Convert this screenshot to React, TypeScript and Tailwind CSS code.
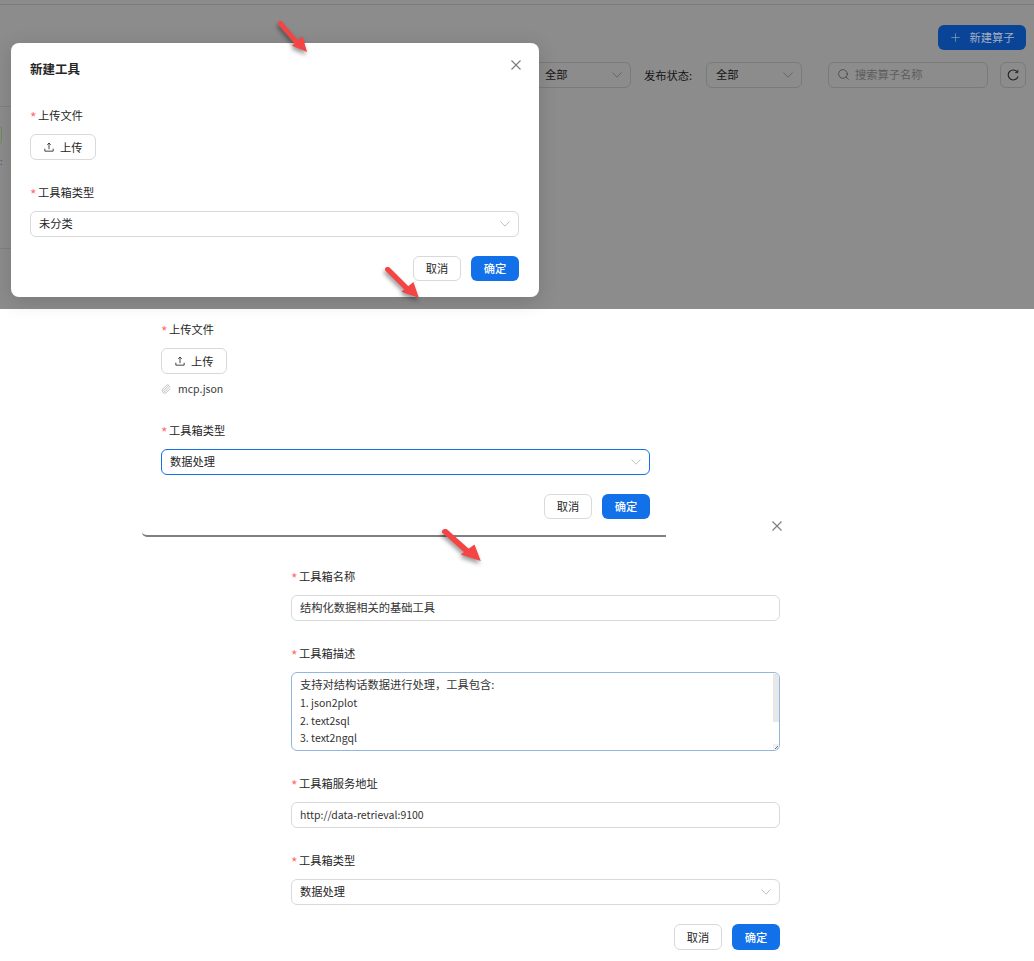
import { Paperclip, Search, Plus } from "lucide-react";
import type { ReactNode } from "react";

const font = "font-['Noto_Sans_CJK_SC','Noto_Sans',sans-serif]";

function Chevron({ color = "#bfbfbf" }: { color?: string }) {
  return (
    <svg width="10" height="6" viewBox="0 0 10 6" fill="none" stroke={color} strokeWidth="1">
      <path d="M0.5 0.5 5 5.2 9.5 0.5" />
    </svg>
  );
}

function Close() {
  return (
    <svg width="10" height="10" viewBox="0 0 10 10" fill="none" stroke="#7a7a7a" strokeWidth="1.1" className="shrink-0">
      <path d="M0.5 0.5 9.5 9.5M9.5 0.5 0.5 9.5" />
    </svg>
  );
}

function Arrow({ className }: { className: string }) {
  return (
    <svg
      viewBox="0 0 32 32"
      preserveAspectRatio="none"
      className={`pointer-events-none absolute drop-shadow-[-1px_3px_2px_rgba(0,0,0,0.4)] ${className}`}
    >
      <path d="M2.5 2.5 20 22" stroke="#f44444" strokeWidth="5" strokeLinecap="round" />
      <path d="M31 32 15 25.5 26 15.5Z" fill="#f44444" />
    </svg>
  );
}

function Label({ children }: { children: ReactNode }) {
  return (
    <div className="mb-[9px] flex h-5 items-center text-[11.25px] text-[#262626]">
      <span className="mr-[2px] h-[14px] w-[6px] text-[14px] leading-[18px] text-[#ff7070]">*</span>
      {children}
    </div>
  );
}

function UploadButton() {
  return (
    <div className="flex h-[26px] w-[66px] items-center rounded-[6px] border border-[#d9d9d9] bg-white pl-[13px] text-[11.25px] text-[#262626]">
      <svg width="10" height="10" viewBox="0 0 12 12" fill="none" stroke="#333" strokeWidth="1.1" className="mr-[6px]">
        <path d="M6 1.2V8.6M3.9 3.3 6 1.2 8.1 3.3M1 8v3h10V8" />
      </svg>
      <span>上传</span>
    </div>
  );
}

function SelectBox({ value, focused }: { value: string; focused?: boolean }) {
  return (
    <div
      className={`flex h-[26px] items-center justify-between rounded-[6px] border bg-white pb-px pl-[8px] pr-[8px] text-[11.25px] text-[#262626] ${
        focused ? "border-[#1470e6]" : "border-[#d9d9d9]"
      }`}
    >
      <span>{value}</span>
      <Chevron />
    </div>
  );
}

function TextInput({ value, small }: { value: string; small?: boolean }) {
  return (
    <div
      className={`flex h-[26px] items-center rounded-[6px] border border-[#d9d9d9] bg-white px-[8px] text-[#333] ${
        small ? "text-[10.5px]" : "pb-px text-[11.25px]"
      }`}
    >
      {value}
    </div>
  );
}

function Footer({ height = "h-[25px]" }: { height?: string }) {
  return (
    <div className="mt-[19px] flex justify-end gap-[10px] text-[11.25px]">
      <div className={`flex w-[48px] items-center justify-center rounded-[6px] border border-[#d9d9d9] bg-white text-[#262626] ${height}`}>
        取消
      </div>
      <div className={`flex w-[48px] items-center justify-center rounded-[6px] bg-[#1271e8] font-medium text-white ${height}`}>
        确定
      </div>
    </div>
  );
}

function DimSelect({ value }: { value: string }) {
  return (
    <div className="flex h-[26px] w-[96px] items-center justify-between rounded-[6px] border border-[#7a7a7a] pb-px pl-[9px] pr-[8px] text-[11.25px] text-[#141414]">
      <span>{value}</span>
      <Chevron color="#666" />
    </div>
  );
}

function Backdrop() {
  return (
    <div className="relative h-[309px] bg-[#8c8c8c]">
      <div className="h-[5px] border-b border-[#7b7b7b]" />
      <div className="flex">
        <div className="mt-[101px] flex h-[143px] w-[11px] flex-col border-y border-[#808080] pt-[20px]">
          <div className="h-[16px] w-[2px] rounded-r-[2px] border border-l-0 border-[#6f8a5a]" />
          <div className="mt-[14px] text-[9px] leading-[10px] text-[#2f5488]">:</div>
        </div>
        <div className="flex flex-1 flex-col items-end pr-[8px] pt-[20px]">
          <div className="flex h-[25px] w-[88px] items-center justify-center gap-[7px] rounded-[6px] bg-[#0a4496] text-[11.25px] text-[#a3afc2]">
            <Plus size={13} strokeWidth={1.1} />
            新建算子
          </div>
          <div className="mt-[12px] flex items-center text-[11.25px] text-[#141414]">
            <DimSelect value="全部" />
            <span className="ml-[13px] mr-[10px] w-[52px] whitespace-nowrap">发布状态:</span>
            <DimSelect value="全部" />
            <div className="ml-[26px] flex h-[26px] w-[160px] items-center gap-[5px] rounded-[6px] border border-[#7a7a7a] pb-px pl-[8px] text-[#5c5c5c]">
              <Search size={13} strokeWidth={1.2} color="#333" />
              搜索算子名称
            </div>
            <div className="ml-[12px] flex h-[26px] w-[26px] items-center justify-center rounded-[6px] border border-[#7a7a7a]">
              <svg width="12" height="12" viewBox="0 0 12 12" fill="none" stroke="#222" strokeWidth="1.1">
                <path d="M10.4 3.2A5 5 0 1 0 11 7.4" />
                <path d="M10.8 0.9V3.6H8.2" strokeWidth="0.9" />
              </svg>
            </div>
          </div>
        </div>
      </div>

      <div className="absolute left-[11px] top-[43px] w-[528px] rounded-[8px] bg-white px-[19px] pb-[16px] pt-[16px] shadow-[0_4px_20px_rgba(0,0,0,0.15)]">
        <div className="mb-[26px] flex h-5 w-[489px] items-start justify-between">
          <span className="text-[12.5px] font-bold leading-5 text-[#262626]">新建工具</span>
          <span className="-mr-[2px] mt-px">
            <Close />
          </span>
        </div>
        <div className="w-[489px]">
          <Label>上传文件</Label>
          <div className="mb-[22px]">
            <UploadButton />
          </div>
          <Label>工具箱类型</Label>
          <SelectBox value="未分类" />
          <Footer />
        </div>
      </div>
    </div>
  );
}

function UploadedForm() {
  return (
    <div className="flex">
      <div className="ml-[142px] h-[228px] w-[524px] rounded-bl-[5px] border-b-2 border-[#7f7f7f] pl-[19px] pt-[10px]">
        <div className="w-[489px]">
          <Label>上传文件</Label>
          <UploadButton />
          <div className="mb-[22px] mt-[6px] flex h-[18px] items-center gap-[7px] text-[10.5px] text-[#3a3a3a]">
            <Paperclip size={10} strokeWidth={1.4} color="#999" />
            mcp.json
          </div>
          <Label>工具箱类型</Label>
          <SelectBox value="数据处理" focused />
          <Footer />
        </div>
      </div>
      <div className="ml-[106px] mt-[212px]">
        <Close />
      </div>
    </div>
  );
}

function DetailForm() {
  return (
    <div className="w-[489px] pt-[29px]">
      <Label>工具箱名称</Label>
      <div className="mb-[22px]">
        <TextInput value="结构化数据相关的基础工具" />
      </div>
      <Label>工具箱描述</Label>
      <div className="relative mb-[22px] h-[79px] overflow-hidden rounded-[6px] border border-[#93b5e1] bg-white pl-[8px] pt-[3px] text-[10.5px] leading-[17.8px] text-[#333]">
        <div className="text-[11.25px]">支持对结构话数据进行处理，工具包含:</div>
        <div>1. json2plot</div>
        <div>2. text2sql</div>
        <div>3. text2ngql</div>
        <div className="absolute right-0 top-px h-[48px] w-[6px] bg-[#e8e8e8]" />
        <div className="absolute bottom-0 right-0 h-[6px] w-[6px] bg-[#f0f0f0]">
          <svg width="6" height="6" viewBox="0 0 6 6" stroke="#555" strokeWidth="0.8">
            <path d="M5 2 2 5M5 4 4 5" />
          </svg>
        </div>
      </div>
      <Label>工具箱服务地址</Label>
      <div className="mb-[22px]">
        <TextInput small value="http://data-retrieval:9100" />
      </div>
      <Label>工具箱类型</Label>
      <SelectBox value="数据处理" />
      <Footer height="h-[26px]" />
    </div>
  );
}

export default function App() {
  return (
    <div className={`relative h-[961px] w-[1034px] overflow-hidden bg-white ${font}`}>
      <Backdrop />
      <UploadedForm />
      <div className="pl-[291px]">
        <DetailForm />
      </div>
      <Arrow className="left-[278px] top-[21px] h-[31px] w-[30px]" />
      <Arrow className="left-[385px] top-[267px] h-[31px] w-[35px]" />
      <Arrow className="left-[442px] top-[529px] h-[32px] w-[40px]" />
    </div>
  );
}
